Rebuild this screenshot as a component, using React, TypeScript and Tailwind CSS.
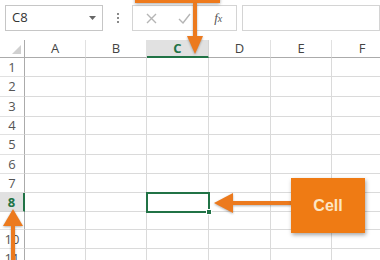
import React from 'react';

const cols = ['A', 'B', 'C', 'D', 'E', 'F'];

const rows = [
  { n: 1, h: 'h-[19px]' },
  { n: 2, h: 'h-[20px]' },
  { n: 3, h: 'h-[20px]' },
  { n: 4, h: 'h-[18px]' },
  { n: 5, h: 'h-[20px]' },
  { n: 6, h: 'h-[19px]' },
  { n: 7, h: 'h-[19px]' },
  { n: 8, h: 'h-[19px]' },
  { n: 9, h: 'h-[18px]' },
  { n: 10, h: 'h-[19px]' },
  { n: 11, h: 'h-[19px]' },
];

const gridCols = 'grid grid-cols-[25px_61px_61px_62px_62px_61px_61px] grid-rows-[100%] w-[393px] overflow-hidden leading-none';

const FormulaBar = () => (
  <div className="flex h-[40px] items-start pt-[5px] pl-[5px]">
    {/* Name box */}
    <div className="flex h-[26px] w-[98px] items-center justify-between border border-[#c6c6c6] bg-white pl-[6px] pr-[6px]">
      <span className="text-[13px] text-[#333]">C8</span>
      <svg width="7" height="4" viewBox="0 0 7 4">
        <path d="M0 0h7L3.5 4z" fill="#666" />
      </svg>
    </div>
    {/* dots */}
    <div className="flex h-[26px] w-[29px] flex-col items-center justify-center gap-[2px]">
      <span className="h-[2px] w-[2px] bg-[#8a8a8a]" />
      <span className="h-[2px] w-[2px] bg-[#8a8a8a]" />
      <span className="h-[2px] w-[2px] bg-[#8a8a8a]" />
    </div>
    {/* cancel / enter / fx */}
    <div className="flex h-[26px] w-[105px] items-center border border-[#d4d4d4] bg-white">
      <div className="flex w-[36px] justify-center pl-[2px]">
        <svg width="11" height="11" viewBox="0 0 11 11">
          <path d="M1 1l9 9M10 1l-9 9" stroke="#b5b5b5" strokeWidth="1.4" />
        </svg>
      </div>
      <div className="flex w-[32px] justify-center">
        <svg width="13" height="11" viewBox="0 0 13 11">
          <path d="M1 6l4 4 7-9" stroke="#b5b5b5" strokeWidth="1.4" fill="none" />
        </svg>
      </div>
      <div className="flex w-[36px] justify-center">
        <span className="text-[13px] italic text-[#555]" style={{ fontFamily: '"Liberation Serif", serif' }}>
          f<span className="text-[10px]">x</span>
        </span>
      </div>
    </div>
    <div className="ml-[5px] h-[26px] flex-1 border border-[#d4d4d4] bg-white" />
  </div>
);

const HeaderRow = () => (
  <div className={`${gridCols} h-[18px]`}>
    <div className="relative border-r border-b border-[#ababab] bg-white">
      <svg className="absolute right-[3px] bottom-[3px]" width="9" height="9" viewBox="0 0 9 9">
        <path d="M9 0v9H0z" fill="#d0d0d0" />
      </svg>
    </div>
    {cols.map((c) =>
      c === 'C' ? (
        <div
          key={c}
          className="flex items-center justify-center border-r border-b-2 border-r-[#d4d4d4] border-b-[#217346] bg-[#e1e1e1] pt-[1px] text-[13px] font-bold text-[#217346]"
        >
          {c}
        </div>
      ) : (
        <div
          key={c}
          className="flex items-center justify-center border-r border-b border-r-[#e1e1e1] border-b-[#ababab] bg-white text-[13px] text-[#444]"
        >
          {c}
        </div>
      )
    )}
  </div>
);

const Row = ({ n, h }: { n: number; h: string }) => {
  const active = n === 8;
  return (
    <div className={`${gridCols} ${h}`}>
      {active ? (
        <div className="flex items-center justify-center border-r-2 border-b border-r-[#217346] border-b-[#d4d4d4] bg-[#e1e1e1] text-[13px] font-bold text-[#217346]">
          {n}
        </div>
      ) : (
        <div className="flex items-center justify-center border-r border-b border-r-[#ababab] border-b-[#e1e1e1] bg-white text-[13px] text-[#555]">
          {n}
        </div>
      )}
      {cols.map((c) => (
        <div key={c} className="border-r border-b border-[#dadada] bg-white" />
      ))}
    </div>
  );
};

export default function App() {
  return (
    <div
      className="relative h-[260px] w-[380px] overflow-hidden bg-white"
      style={{ fontFamily: '"Open Sans", "Noto Sans", sans-serif' }}
    >
      <FormulaBar />
      <HeaderRow />
      {rows.map((r) => (
        <Row key={r.n} n={r.n} h={r.h} />
      ))}

      {/* Active cell C8 selection */}
      <div className="absolute left-[146px] top-[192px] h-[21px] w-[64px] border-2 border-[#217346]">
        <span className="absolute -right-[4px] -bottom-[4px] h-[6px] w-[6px] border border-white bg-[#217346]" />
      </div>

      {/* Top callout and arrow */}
      <div className="absolute left-[135px] -top-[20px] h-[23px] w-[85px] bg-[#ee7a1c] shadow-[0_1px_3px_rgba(0,0,0,0.35)]" />
      <svg className="absolute left-[185px] top-[3px] drop-shadow-[0_1px_1px_rgba(0,0,0,0.3)]" width="20" height="54" viewBox="0 0 20 54">
        <rect x="8" y="0" width="4" height="36" fill="#ec7a1e" />
        <path d="M2 33h16L10 51z" fill="#ec7a1e" />
      </svg>

      {/* Cell callout */}
      <svg className="absolute left-[212px] top-[192px] drop-shadow-[0_1px_1px_rgba(0,0,0,0.3)]" width="80" height="22" viewBox="0 0 80 22">
        <rect x="18" y="9" width="62" height="4" fill="#ec7a1e" />
        <path d="M2 11L21 1v20z" fill="#ec7a1e" />
      </svg>
      <div
        className="absolute left-[291px] top-[178px] flex h-[55px] w-[74px] items-center justify-center bg-[#ef7b14] text-[16px] font-bold text-[#fde6c4] shadow-[1px_2px_4px_rgba(0,0,0,0.35)]"
        style={{ fontFamily: '"Liberation Sans", Arial, sans-serif' }}
      >
        Cell
      </div>

      {/* Row header arrow */}
      <svg className="absolute left-[2px] top-[208px] drop-shadow-[0_1px_1px_rgba(0,0,0,0.3)]" width="22" height="52" viewBox="0 0 22 52">
        <path d="M11 1L21 18H1z" fill="#ec7a1e" />
        <rect x="9" y="16" width="4" height="36" fill="#ec7a1e" />
      </svg>
    </div>
  );
}
